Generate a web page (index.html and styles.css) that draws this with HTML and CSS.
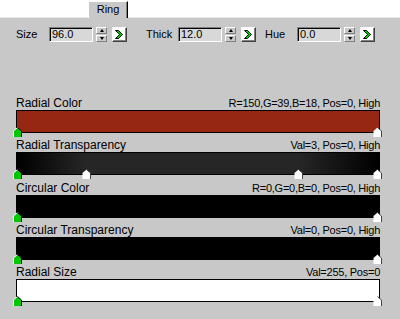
FILE: index.html
```html
<!DOCTYPE html>
<html lang="en">
<head>
    <meta charset="UTF-8">
    <title>Ring</title>
    <link rel="stylesheet" href="styles.css">
</head>
<body>
    <div class="tabs">
        <div class="tab">Ring</div>
    </div>
    <div class="panel">
        <div class="params">
            <div class="param">
                <span class="lbl lbl-size">Size</span>
                <div class="field">96.0</div>
                <div class="spin"><i class="up"></i><i class="down"></i></div>
                <div class="key"><svg width="9" height="9" viewBox="0 0 9 9"><path d="M0.5 0.5H3.5L7.5 4.5L3.5 8.5H0.5L4.5 4.5Z" fill="#00d000" stroke="#000" stroke-width="1"/><path d="M3 2.5L5 4.5L3 6.5" fill="none" stroke="#008000"/></svg></div>
            </div>
            <div class="param param-thick">
                <span class="lbl lbl-thick">Thick</span>
                <div class="field">12.0</div>
                <div class="spin"><i class="up"></i><i class="down"></i></div>
                <div class="key"><svg width="9" height="9" viewBox="0 0 9 9"><path d="M0.5 0.5H3.5L7.5 4.5L3.5 8.5H0.5L4.5 4.5Z" fill="#00d000" stroke="#000" stroke-width="1"/><path d="M3 2.5L5 4.5L3 6.5" fill="none" stroke="#008000"/></svg></div>
            </div>
            <div class="param param-hue">
                <span class="lbl lbl-hue">Hue</span>
                <div class="field">0.0</div>
                <div class="spin"><i class="up"></i><i class="down"></i></div>
                <div class="key"><svg width="9" height="9" viewBox="0 0 9 9"><path d="M0.5 0.5H3.5L7.5 4.5L3.5 8.5H0.5L4.5 4.5Z" fill="#00d000" stroke="#000" stroke-width="1"/><path d="M3 2.5L5 4.5L3 6.5" fill="none" stroke="#008000"/></svg></div>
            </div>
        </div>

        <div class="grads">
            <div class="grad">
                <div class="grad-head"><span class="name">Radial Color</span><span class="value">R=150,G=39,B=18, Pos=0, High</span></div>
                <div class="bar bar-red">
                    <svg class="flag" style="left:-4px" width="9" height="10" viewBox="0 0 9 10"><path d="M0.5 10V4L4.5 0.5L8.5 4V10Z" fill="#00c800"/><path d="M0.5 10V4L4.5 0.5" fill="none" stroke="#fff"/><path d="M4.5 0.5L8.5 4V10" fill="none" stroke="#000"/></svg>
                    <svg class="flag" style="left:356px" width="9" height="10" viewBox="0 0 9 10"><path d="M0.5 10V4L4.5 0.5L8.5 4V10Z" fill="#fff"/><path d="M4.5 0.5L8.5 4V10" fill="none" stroke="#404040"/></svg>
                </div>
            </div>
            <div class="grad">
                <div class="grad-head"><span class="name">Radial Transparency</span><span class="value">Val=3, Pos=0, High</span></div>
                <div class="bar bar-fade">
                    <svg class="flag" style="left:-4px" width="9" height="10" viewBox="0 0 9 10"><path d="M0.5 10V4L4.5 0.5L8.5 4V10Z" fill="#00c800"/><path d="M0.5 10V4L4.5 0.5" fill="none" stroke="#fff"/><path d="M4.5 0.5L8.5 4V10" fill="none" stroke="#000"/></svg>
                    <svg class="flag" style="left:65px" width="9" height="10" viewBox="0 0 9 10"><path d="M0.5 10V4L4.5 0.5L8.5 4V10Z" fill="#fff"/><path d="M4.5 0.5L8.5 4V10" fill="none" stroke="#404040"/></svg>
                    <svg class="flag" style="left:277px" width="9" height="10" viewBox="0 0 9 10"><path d="M0.5 10V4L4.5 0.5L8.5 4V10Z" fill="#fff"/><path d="M4.5 0.5L8.5 4V10" fill="none" stroke="#404040"/></svg>
                    <svg class="flag" style="left:356px" width="9" height="10" viewBox="0 0 9 10"><path d="M0.5 10V4L4.5 0.5L8.5 4V10Z" fill="#fff"/><path d="M4.5 0.5L8.5 4V10" fill="none" stroke="#404040"/></svg>
                </div>
            </div>
            <div class="grad">
                <div class="grad-head"><span class="name">Circular Color</span><span class="value">R=0,G=0,B=0, Pos=0, High</span></div>
                <div class="bar bar-black">
                    <svg class="flag" style="left:-4px" width="9" height="10" viewBox="0 0 9 10"><path d="M0.5 10V4L4.5 0.5L8.5 4V10Z" fill="#00c800"/><path d="M0.5 10V4L4.5 0.5" fill="none" stroke="#fff"/><path d="M4.5 0.5L8.5 4V10" fill="none" stroke="#000"/></svg>
                    <svg class="flag" style="left:356px" width="9" height="10" viewBox="0 0 9 10"><path d="M0.5 10V4L4.5 0.5L8.5 4V10Z" fill="#fff"/><path d="M4.5 0.5L8.5 4V10" fill="none" stroke="#404040"/></svg>
                </div>
            </div>
            <div class="grad">
                <div class="grad-head"><span class="name">Circular Transparency</span><span class="value">Val=0, Pos=0, High</span></div>
                <div class="bar bar-black">
                    <svg class="flag" style="left:-4px" width="9" height="10" viewBox="0 0 9 10"><path d="M0.5 10V4L4.5 0.5L8.5 4V10Z" fill="#00c800"/><path d="M0.5 10V4L4.5 0.5" fill="none" stroke="#fff"/><path d="M4.5 0.5L8.5 4V10" fill="none" stroke="#000"/></svg>
                    <svg class="flag" style="left:356px" width="9" height="10" viewBox="0 0 9 10"><path d="M0.5 10V4L4.5 0.5L8.5 4V10Z" fill="#fff"/><path d="M4.5 0.5L8.5 4V10" fill="none" stroke="#404040"/></svg>
                </div>
            </div>
            <div class="grad">
                <div class="grad-head"><span class="name">Radial Size</span><span class="value">Val=255, Pos=0</span></div>
                <div class="bar bar-white">
                    <svg class="flag" style="left:-4px" width="9" height="10" viewBox="0 0 9 10"><path d="M0.5 10V4L4.5 0.5L8.5 4V10Z" fill="#00c800"/><path d="M0.5 10V4L4.5 0.5" fill="none" stroke="#fff"/><path d="M4.5 0.5L8.5 4V10" fill="none" stroke="#000"/></svg>
                    <svg class="flag" style="left:356px" width="9" height="10" viewBox="0 0 9 10"><path d="M0.5 10V4L4.5 0.5L8.5 4V10Z" fill="#fff"/><path d="M4.5 0.5L8.5 4V10" fill="none" stroke="#404040"/></svg>
                </div>
            </div>
        </div>
    </div>
</body>
</html>
```

FILE: styles.css
```css
body {
    margin: 0;
    height: 319px;
    overflow: hidden;
    background: #fff;
    color: #000;
    font-family: "Liberation Sans", Arial, sans-serif;
    font-size: 11px;
    display: flex;
    flex-direction: column;
}
.tabs {
    height: 16px;
    padding: 1px 0 0 88px;
    display: flex;
    align-items: flex-start;
}
.tab {
    position: relative;
    z-index: 1;
    width: 40px;
    height: 17px;
    box-sizing: border-box;
    border: 1px solid;
    border-color: #fff #000 transparent #fff;
    border-bottom: none;
    box-shadow: inset -1px 0 #808080;
    background: #c8c8c8;
    text-align: center;
    line-height: 15px;
}
.panel {
    flex: 1;
    background: #c8c8c8;
    border-top: 1px solid #e8e8e8;
    padding: 9px 20px 0 16px;
}
.params {
    display: flex;
    height: 15px;
}
.param {
    display: flex;
    align-items: center;
}
.param-thick {
    margin-left: 19px;
}
.param-hue {
    margin-left: 9px;
}
.lbl {
    line-height: 15px;
}
.lbl-size { width: 33px; }
.lbl-thick { width: 32px; }
.lbl-hue { width: 32px; }
.field {
    width: 44px;
    height: 15px;
    box-sizing: border-box;
    border: 1px solid;
    border-color: #808080 #fff #fff #808080;
    box-shadow: inset 1px 1px #000;
    background: #d8d8d8;
    padding-left: 2px;
    line-height: 13px;
}
.spin {
    width: 11px;
    height: 15px;
    margin-left: 3px;
    box-sizing: border-box;
    display: flex;
    flex-direction: column;
    gap: 1px;
}
.spin i {
    flex: 1;
    box-sizing: border-box;
    border: 1px solid;
    border-color: #fff #808080 #808080 #fff;
    display: flex;
    align-items: center;
    justify-content: center;
}
.spin i::after {
    content: "";
    border-left: 2px solid transparent;
    border-right: 2px solid transparent;
}
.spin .up::after {
    border-bottom: 3px solid #000;
}
.spin .down::after {
    border-top: 3px solid #000;
}
.key {
    width: 15px;
    height: 15px;
    margin-left: 5px;
    box-sizing: border-box;
    border: 1px solid;
    border-color: #fff #404040 #404040 #fff;
    box-shadow: inset -1px -1px #808080;
    background: #fff;
    display: flex;
    align-items: center;
    justify-content: center;
}
.grads {
    margin-top: 55px;
    display: flex;
    flex-direction: column;
    gap: 6.25px;
}
.grad-head {
    display: flex;
    justify-content: space-between;
    align-items: baseline;
    height: 13px;
    line-height: 13px;
}
.grad-head .name {
    font-size: 12px;
}
.grad-head .value {
    letter-spacing: -0.25px;
}
.bar {
    position: relative;
    height: 23px;
    box-sizing: border-box;
    border: 1px solid #000;
}
.bar-red {
    background: #962712;
}
.bar-fade {
    background: linear-gradient(to right, #000 0%, #262626 19%, #262626 78%, #000 100%);
}
.bar-black {
    background: #000;
}
.bar-white {
    background: #fff;
}
.flag {
    position: absolute;
    top: 16px;
    display: block;
}
```
